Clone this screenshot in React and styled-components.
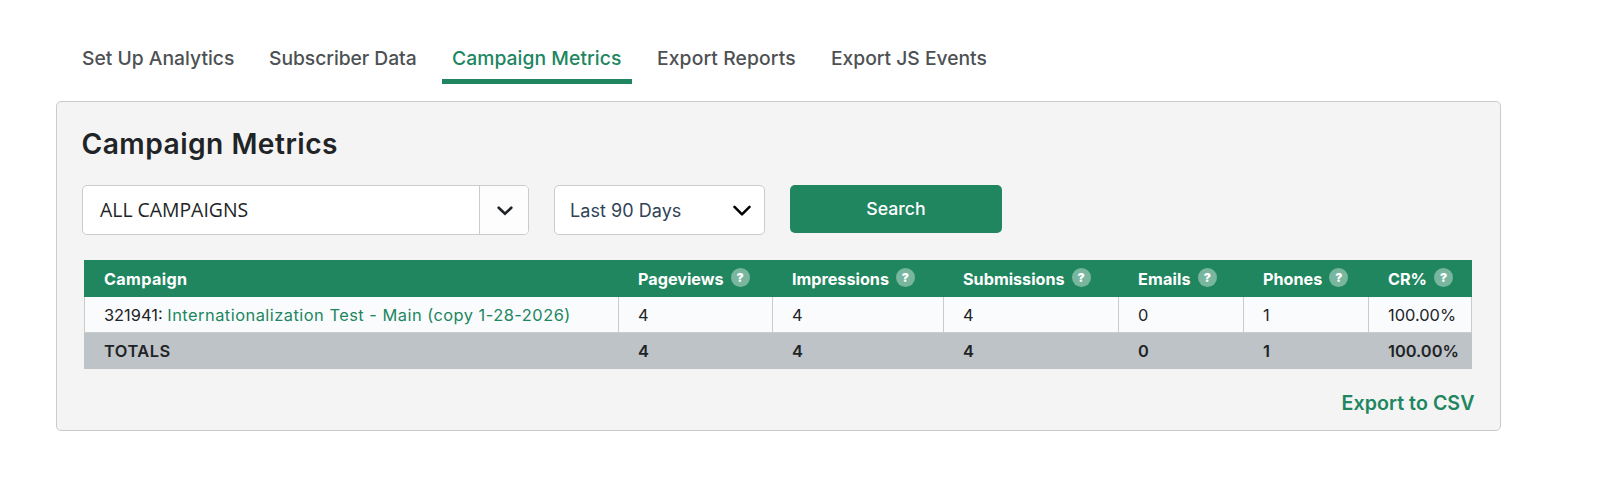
import { useState } from "react";
import styled, { createGlobalStyle } from "styled-components";

const COLORS = {
  green: "#20865f",
  ink: "#212426",
  muted: "#4d5153",
  slate: "#2f4358",
  line: "#cacbcb",
  panel: "#f4f4f4",
  row: "#fafbfd",
  totals: "#bec3c7",
};

const TABS = [
  { label: "Set Up Analytics", width: 172 },
  { label: "Subscriber Data", width: 168, tracking: -0.05 },
  { label: "Campaign Metrics", width: 190, tracking: 0.06 },
  { label: "Export Reports", width: 159, tracking: 0.12 },
  { label: "Export JS Events", width: 175, tracking: -0.02 },
];

const COLUMNS = [
  { title: "Campaign", width: 534, tracking: 0.35 },
  { title: "Pageviews", width: 154, help: true },
  { title: "Impressions", width: 171, help: true },
  { title: "Submissions", width: 175, help: true },
  { title: "Emails", width: 125, tracking: 0.15, help: true },
  { title: "Phones", width: 125, help: true },
  { title: "CR%", width: 104, help: true },
];

const ROWS = [
  {
    id: 321941,
    name: "Internationalization Test - Main (copy 1-28-2026)",
    values: ["4", "4", "4", "0", "1", "100.00%"],
  },
];

const TOTALS = ["4", "4", "4", "0", "1", "100.00%"];

function App() {
  const [active, setActive] = useState("Campaign Metrics");

  return (
    <Wrapper>
      <GlobalStyle />
      <Tabs>
        {TABS.map(({ label, width, tracking }) => (
          <Tab
            key={label}
            $width={width}
            $tracking={tracking}
            $active={label === active}
            onClick={() => setActive(label)}
          >
            {label}
          </Tab>
        ))}
      </Tabs>
      <Panel>
        <Title>Campaign Metrics</Title>
        <Filters>
          <CampaignSelect>
            <CampaignValue>ALL CAMPAIGNS</CampaignValue>
            <CampaignToggle>
              <svg width="16" height="10" viewBox="0 0 16 10" fill="none">
                <path
                  d="M1.7 1.7 8 7.7l6.3-6"
                  stroke="#212426"
                  strokeWidth="2.6"
                  strokeLinecap="round"
                />
              </svg>
            </CampaignToggle>
          </CampaignSelect>
          <RangeSelect>
            Last 90 Days
            <svg width="18" height="12" viewBox="0 0 18 12" fill="none">
              <path
                d="M1.5 1.9 9 9.4l7.5-7.5"
                stroke="#000"
                strokeWidth="2.5"
                strokeLinecap="round"
                strokeLinejoin="round"
              />
            </svg>
          </RangeSelect>
          <SearchButton>Search</SearchButton>
        </Filters>
        <Table>
          <colgroup>
            {COLUMNS.map(({ title, width }) => (
              <Col key={title} $width={width} />
            ))}
          </colgroup>
          <thead>
            <tr>
              {COLUMNS.map(({ title, tracking, help }) => (
                <HeadCell key={title} $tracking={tracking}>
                  <HeadLabel>
                    {title}
                    {help && <Help>?</Help>}
                  </HeadLabel>
                </HeadCell>
              ))}
            </tr>
          </thead>
          <tbody>
            {ROWS.map(({ id, name, values }) => (
              <tr key={id}>
                <Cell>
                  {id}: <CampaignLink href="#">{name}</CampaignLink>
                </Cell>
                {values.map((value, i) => (
                  <Cell key={i}>{value}</Cell>
                ))}
              </tr>
            ))}
          </tbody>
          <tfoot>
            <tr>
              <TotalCell $tracking={0.5}>TOTALS</TotalCell>
              {TOTALS.map((value, i) => (
                <TotalCell key={i}>{value}</TotalCell>
              ))}
            </tr>
          </tfoot>
        </Table>
        <ExportLink href="#">Export to CSV</ExportLink>
      </Panel>
    </Wrapper>
  );
}

const GlobalStyle = createGlobalStyle`
  *, *::before, *::after {
    box-sizing: border-box;
  }

  body {
    margin: 0;
    background-color: #fff;
    color: ${COLORS.ink};
    font-family: Inter, "Liberation Sans", sans-serif;
  }

  button {
    font-family: inherit;
    border: none;
    cursor: pointer;
  }

  a {
    text-decoration: none;
    color: ${COLORS.green};
  }
`;

const Wrapper = styled.main`
  width: 1501px;
  padding: 36px 0 0 56px;
`;

const Tabs = styled.nav`
  display: flex;
  gap: 15px;
  padding-left: 16px;
`;

const Tab = styled.button`
  width: ${(props) => props.$width}px;
  height: 48px;
  padding: 1px 0 0 10px;
  background: none;
  border-bottom: 5px solid ${(props) => (props.$active ? COLORS.green : "transparent")};
  color: ${(props) => (props.$active ? COLORS.green : COLORS.muted)};
  font-size: 19.3px;
  font-weight: 500;
  letter-spacing: ${(props) => props.$tracking || 0}px;
  line-height: 42px;
  text-align: left;
  white-space: nowrap;
`;

const Panel = styled.section`
  display: flex;
  flex-direction: column;
  height: 330px;
  margin-top: 17px;
  padding: 26px 25px 0;
  background-color: ${COLORS.panel};
  border: 1px solid ${COLORS.line};
  border-radius: 5px;
`;

const Title = styled.h1`
  margin: 0 0 25px -0.5px;
  font-size: 28.2px;
  font-weight: 600;
  letter-spacing: 0.46px;
  line-height: 32px;
`;

const Filters = styled.div`
  display: flex;
  align-items: flex-start;
  gap: 25px;
  margin-bottom: 25px;
`;

const CampaignSelect = styled.div`
  display: flex;
  width: 447px;
  height: 50px;
  overflow: hidden;
  background-color: #fff;
  border: 1px solid ${COLORS.line};
  border-radius: 5px;
`;

const CampaignValue = styled.div`
  flex: 1;
  padding-left: 17px;
  font-family: "Open Sans", "Noto Sans", sans-serif;
  font-size: 19.4px;
  line-height: 47px;
`;

const CampaignToggle = styled.button`
  display: flex;
  justify-content: center;
  align-items: center;
  width: 49px;
  padding: 1px 0 0 1px;
  background-color: #fdfdfd;
  border-left: 1px solid ${COLORS.line};
`;

const RangeSelect = styled.button`
  display: flex;
  justify-content: space-between;
  align-items: center;
  width: 211px;
  height: 50px;
  padding: 1px 13px 0 15px;
  background-color: #fff;
  border: 1px solid ${COLORS.line};
  border-radius: 5px;
  color: ${COLORS.slate};
  font-size: 18px;
  letter-spacing: 0.05px;
`;

const SearchButton = styled.button`
  width: 212px;
  height: 48px;
  padding: 0 0 1px;
  background-color: ${COLORS.green};
  border-radius: 5px;
  color: #fff;
  font-size: 17.7px;
  font-weight: 500;
`;

const Table = styled.table`
  width: 1388px;
  margin-left: 2px;
  table-layout: fixed;
  border-collapse: separate;
  border-spacing: 0;
  font-size: 16.4px;
`;

const Col = styled.col`
  width: ${(props) => props.$width}px;
`;

const HeadCell = styled.th`
  height: 37px;
  padding: 0 0 0 20px;
  background-color: ${COLORS.green};
  color: #fff;
  font-size: 16.2px;
  font-weight: 700;
  letter-spacing: ${(props) => props.$tracking || 0}px;
  text-align: left;
`;

const HeadLabel = styled.span`
  display: flex;
  align-items: center;
  gap: 7px;
`;

const Help = styled.span`
  width: 19px;
  height: 19px;
  margin-top: -1.5px;
  background-color: #79b69f;
  border-radius: 50%;
  font-size: 12px;
  font-weight: 900;
  letter-spacing: 0;
  line-height: 19px;
  text-align: center;
`;

const Cell = styled.td`
  height: 36px;
  padding: 0 0 0 19px;
  background-color: ${COLORS.row};
  border-left: 1px solid ${COLORS.line};
  border-bottom: 1px solid ${COLORS.line};
  white-space: nowrap;

  &:last-child {
    border-right: 1px solid ${COLORS.line};
  }
`;

const CampaignLink = styled.a`
  letter-spacing: 0.49px;
`;

const TotalCell = styled.td`
  height: 36px;
  padding: 0 0 0 20px;
  background-color: ${COLORS.totals};
  font-weight: 600;
  letter-spacing: ${(props) => props.$tracking || 0}px;
`;

const ExportLink = styled.a`
  align-self: flex-end;
  margin-top: 22px;
  margin-right: 0.5px;
  font-size: 19.6px;
  font-weight: 600;
  letter-spacing: 0.06px;
  line-height: 24px;
`;

export default App;
